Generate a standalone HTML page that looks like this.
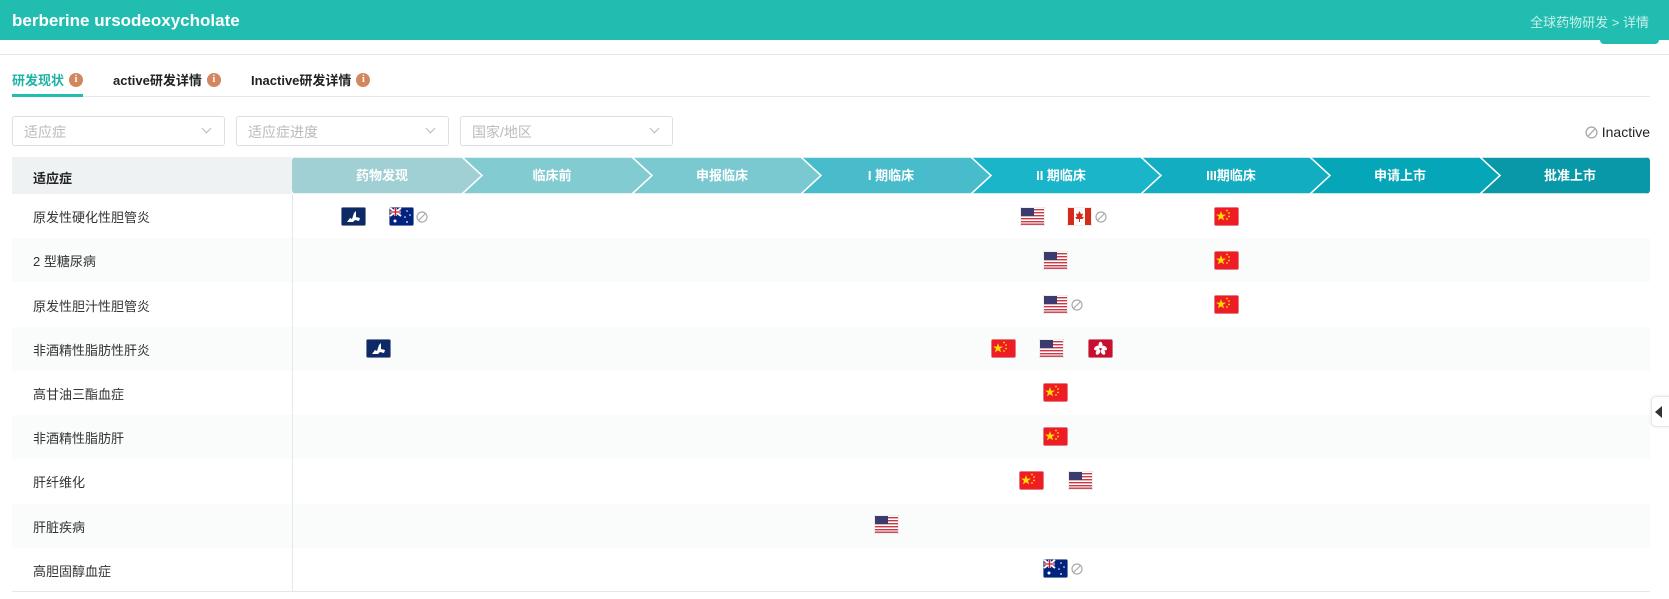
<!DOCTYPE html>
<html><head><meta charset="utf-8"><style>
*{margin:0;padding:0;box-sizing:border-box}
body{width:1669px;height:599px;background:#fff;font-family:"Liberation Sans","Noto Sans CJK SC",sans-serif;position:relative;overflow:hidden;color:#333}
.a{position:absolute}
.hdr{left:0;top:0;width:1669px;height:40px;background:#20bdb0}
.title{left:12px;top:11px;color:#fff;font-size:17px;font-weight:bold}
.bc{right:20px;top:12px;color:#c9f0ec;font-size:13px}
.tab{top:70px;font-size:13px;font-weight:bold;color:#222;display:flex;align-items:center}
.tab i{display:inline-block;width:14px;height:14px;border-radius:50%;background:#d3875f;color:#fff;font-style:normal;font-size:10px;text-align:center;line-height:14px;margin-left:5px;font-family:"Liberation Serif",serif;font-weight:bold}
.dd{top:116px;height:30px;border:1px solid #dcdfe6;border-radius:3px;color:#bbb;font-size:14px;padding:5px 11px}
.dd:after{content:"";position:absolute;right:14px;top:8px;width:6px;height:6px;border-right:1px solid #bbb;border-bottom:1px solid #bbb;transform:rotate(45deg)}
.row{left:12px;width:1638px;height:44px;font-size:13px;color:#333}
.row span{position:absolute;left:21px;top:13px}
.st{top:157px;height:37px;color:#fff;font-size:13px;font-weight:bold;text-align:center;line-height:37px}
</style></head><body>
<svg width="0" height="0" style="position:absolute">
<defs>
<symbol id="us" viewBox="0 0 25 19"><rect width="25" height="19" rx="2" fill="#fff" stroke="#ddd"/><g fill="#c53a45"><rect x="1" y="2" width="23" height="1.4"/><rect x="1" y="5" width="23" height="1.4"/><rect x="1" y="8" width="23" height="1.4"/><rect x="1" y="11" width="23" height="1.4"/><rect x="1" y="14" width="23" height="1.4"/><rect x="1" y="16.5" width="23" height="1.4"/></g><rect x="1" y="1" width="13" height="8" fill="#3c3b6e"/></symbol>
<symbol id="cn" viewBox="0 0 25 19"><rect width="25" height="19" rx="2" fill="#ee1c25" stroke="#ddd"/><polygon points="7,4 8.2,7.6 12,7.6 9,9.8 10.1,13.4 7,11.2 3.9,13.4 5,9.8 2,7.6 5.8,7.6" fill="#ffde00"/><circle cx="13" cy="3.5" r=".9" fill="#ffde00"/><circle cx="15" cy="6" r=".9" fill="#ffde00"/><circle cx="15" cy="9.5" r=".9" fill="#ffde00"/><circle cx="13" cy="12" r=".9" fill="#ffde00"/></symbol>
<symbol id="eu" viewBox="0 0 25 19"><rect width="25" height="19" rx="2" fill="#0d2a66" stroke="#ddd"/><path d="M6 15 L9 11 L11 12 L13 6 L15 4 L15 10 L19 11 L18 14 L14 13 L12 15 Z" fill="#fff"/></symbol>
<symbol id="au" viewBox="0 0 25 19"><rect width="25" height="19" rx="2" fill="#00247d" stroke="#ddd"/><rect x="1" y="1" width="11" height="8" fill="#00247d"/><path d="M1 1 L12 9 M12 1 L1 9" stroke="#fff" stroke-width="2"/><path d="M6.5 1 V9 M1 5 H12" stroke="#fff" stroke-width="2.5"/><path d="M6.5 1 V9 M1 5 H12" stroke="#cf142b" stroke-width="1.3"/><circle cx="6" cy="14" r="1.5" fill="#fff"/><circle cx="18" cy="4" r=".8" fill="#fff"/><circle cx="21" cy="8" r=".8" fill="#fff"/><circle cx="16" cy="10" r=".8" fill="#fff"/><circle cx="18" cy="15" r=".9" fill="#fff"/></symbol>
<symbol id="ca" viewBox="0 0 25 19"><rect width="25" height="19" rx="2" fill="#fff" stroke="#ddd"/><rect x="1" y="1" width="6" height="17" fill="#d52b1e"/><rect x="18" y="1" width="6" height="17" fill="#d52b1e"/><path d="M12.5 4 L14 7 L16 6.5 L15 10 L17 10 L15.5 12 L13 12 L13 15 L12 15 L12 12 L9.5 12 L8 10 L10 10 L9 6.5 L11 7 Z" fill="#d52b1e"/></symbol>
<symbol id="hk" viewBox="0 0 25 19"><rect width="25" height="19" rx="2" fill="#c8102e" stroke="#ddd"/><g fill="#fff"><ellipse cx="12.5" cy="6" rx="2" ry="3.2"/><ellipse cx="9" cy="9" rx="3.2" ry="2" transform="rotate(-30 9 9)"/><ellipse cx="16" cy="9" rx="3.2" ry="2" transform="rotate(30 16 9)"/><ellipse cx="10" cy="13" rx="2" ry="3" transform="rotate(30 10 13)"/><ellipse cx="15" cy="13" rx="2" ry="3" transform="rotate(-30 15 13)"/></g></symbol>
<symbol id="no" viewBox="0 0 12 12"><circle cx="6" cy="6" r="5" fill="none" stroke="#aaa" stroke-width="1.2"/><path d="M2.5 9.5 L9.5 2.5" stroke="#aaa" stroke-width="1.2"/></symbol>
</defs></svg>

<div class="a hdr"></div>
<div class="a title">berberine ursodeoxycholate</div>
<div class="a bc">全球药物研发 &gt; 详情</div>
<div class="a" style="left:1600px;top:38px;width:59px;height:6px;background:#20bdb0;border-radius:0 0 4px 4px"></div>
<div class="a" style="left:0;top:54px;width:1669px;height:1px;background:#e6e6e6"></div>

<div class="a tab" style="left:12px;color:#20b2a6">研发现状<i>i</i></div>
<div class="a tab" style="left:113px">active研发详情<i>i</i></div>
<div class="a tab" style="left:251px">Inactive研发详情<i>i</i></div>
<div class="a" style="left:12px;top:96px;width:1638px;height:1px;background:#e4e7ed"></div>
<div class="a" style="left:12px;top:94px;width:71px;height:3px;background:#20bdb0"></div>

<div class="a dd" style="left:12px;width:213px">适应症</div>
<div class="a dd" style="left:236px;width:213px">适应症进度</div>
<div class="a dd" style="left:460px;width:213px">国家/地区</div>
<div class="a" style="right:19px;top:124px;font-size:14px;color:#222;display:flex;align-items:center"><svg width="13" height="13" style="margin-right:4px"><use href="#no"/></svg>Inactive</div>

<div class="a" style="left:12px;top:157px;width:280px;height:37px;background:#eff2f3;font-size:13px;font-weight:bold;color:#222;padding:11px 21px">适应症</div>
<svg class="a" style="left:292px;top:157px" width="1358" height="37">
<defs><clipPath id="cp"><rect width="1358" height="37" rx="4"/></clipPath></defs>
<g clip-path="url(#cp)" stroke="#fff" stroke-width="1.5">
<polygon points="-5,0 170,0 190,18.5 170,37 -5,37" fill="#a0cfd4"/>
<polygon points="170,0 340,0 360,18.5 340,37 170,37 190,18.5" fill="#82cbd1"/>
<polygon points="340,0 509,0 529,18.5 509,37 340,37 360,18.5" fill="#7ac9d1"/>
<polygon points="509,0 679,0 699,18.5 679,37 509,37 529,18.5" fill="#49bccb"/>
<polygon points="679,0 849,0 869,18.5 849,37 679,37 699,18.5" fill="#1ab5c9"/>
<polygon points="849,0 1018,0 1038,18.5 1018,37 849,37 869,18.5" fill="#12adc0"/>
<polygon points="1018,0 1188,0 1208,18.5 1188,37 1018,37 1038,18.5" fill="#06a6b9"/>
<polygon points="1188,0 1370,0 1370,37 1188,37 1208,18.5" fill="#0898a8"/>
</g></svg>
<div class="a st" style="left:292px;width:180px">药物发现</div>
<div class="a st" style="left:462px;width:180px">临床前</div>
<div class="a st" style="left:632px;width:180px">申报临床</div>
<div class="a st" style="left:801px;width:180px">I 期临床</div>
<div class="a st" style="left:971px;width:180px">II 期临床</div>
<div class="a st" style="left:1141px;width:180px">III期临床</div>
<div class="a st" style="left:1310px;width:180px">申请上市</div>
<div class="a st" style="left:1480px;width:180px">批准上市</div>

<div class="a row" style="top:194px"><span>原发性硬化性胆管炎</span></div>
<div class="a row" style="top:238px;background:#fafbfb"><span>2 型糖尿病</span></div>
<div class="a row" style="top:283px"><span>原发性胆汁性胆管炎</span></div>
<div class="a row" style="top:327px;background:#fafbfb"><span>非酒精性脂肪性肝炎</span></div>
<div class="a row" style="top:371px"><span>高甘油三酯血症</span></div>
<div class="a row" style="top:415px;background:#fafbfb"><span>非酒精性脂肪肝</span></div>
<div class="a row" style="top:459px"><span>肝纤维化</span></div>
<div class="a row" style="top:504px;background:#fafbfb"><span>肝脏疾病</span></div>
<div class="a row" style="top:548px"><span>高胆固醇血症</span></div>
<div class="a" style="left:292px;top:194px;width:1px;height:397px;background:#e4e7ed"></div>
<div class="a" style="left:12px;top:591px;width:1638px;height:1px;background:#e4e7ed"></div>

<svg class="a" style="left:0;top:0;overflow:visible" width="1669" height="599">
<use href="#eu" x="341" y="207" width="25" height="19"/><use href="#au" x="389" y="207" width="25" height="19"/><use href="#no" x="416" y="211" width="12" height="12"/>
<use href="#us" x="1020" y="207" width="25" height="19"/><use href="#ca" x="1067" y="207" width="25" height="19"/><use href="#no" x="1095" y="211" width="12" height="12"/>
<use href="#cn" x="1214" y="207" width="25" height="19"/>
<use href="#us" x="1043" y="251" width="25" height="19"/><use href="#cn" x="1214" y="251" width="25" height="19"/>
<use href="#us" x="1043" y="295" width="25" height="19"/><use href="#no" x="1071" y="299" width="12" height="12"/><use href="#cn" x="1214" y="295" width="25" height="19"/>
<use href="#eu" x="366" y="339" width="25" height="19"/><use href="#cn" x="991" y="339" width="25" height="19"/><use href="#us" x="1039" y="339" width="25" height="19"/><use href="#hk" x="1088" y="339" width="25" height="19"/>
<use href="#cn" x="1043" y="383" width="25" height="19"/>
<use href="#cn" x="1043" y="427" width="25" height="19"/>
<use href="#cn" x="1019" y="471" width="25" height="19"/><use href="#us" x="1068" y="471" width="25" height="19"/>
<use href="#us" x="874" y="515" width="25" height="19"/>
<use href="#au" x="1043" y="559" width="25" height="19"/><use href="#no" x="1071" y="563" width="12" height="12"/>
</svg>

<div class="a" style="left:1651px;top:396px;width:20px;height:31px;background:#fff;border:1px solid #e4e7ed;border-radius:5px 0 0 5px;box-shadow:0 0 3px rgba(0,0,0,.1)"></div>
<div class="a" style="left:1655px;top:406px;width:0;height:0;border-top:6px solid transparent;border-bottom:6px solid transparent;border-right:7px solid #333"></div>
</body></html>
